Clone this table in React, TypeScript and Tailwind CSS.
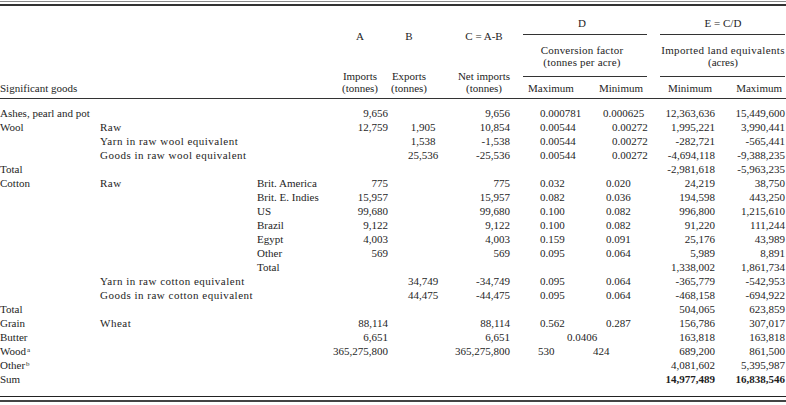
const cols = "grid grid-cols-[100px_157px_73px_60px_66px_56px_78px_62px_65px_69px]";

type Row = {
  g?: string;
  sup?: string;
  s?: string;
  c?: string;
  a?: string;
  b?: string;
  n?: string;
  dmax?: string;
  dmaxPad?: string;
  dmin?: string;
  dminPad?: string;
  span?: string;
  emin?: string;
  emax?: string;
  bold?: boolean;
};

const W = "pl-[22px]";
const C3 = "pl-[16px]";

const rows: Row[] = [
  { g: "Ashes, pearl and pot", a: "9,656", n: "9,656", dmax: "0.000781", dmin: "0.000625", dminPad: "pl-[13px]", emin: "12,363,636", emax: "15,449,600" },
  { g: "Wool", s: "Raw", a: "12,759", b: "1,905", n: "10,854", dmax: "0.00544", dmin: "0.00272", dminPad: W, emin: "1,995,221", emax: "3,990,441" },
  { s: "Yarn in raw wool equivalent", b: "1,538", n: "-1,538", dmax: "0.00544", dmin: "0.00272", dminPad: W, emin: "-282,721", emax: "-565,441" },
  { s: "Goods in raw wool equivalent", b: "25,536", n: "-25,536", dmax: "0.00544", dmin: "0.00272", dminPad: W, emin: "-4,694,118", emax: "-9,388,235" },
  { g: "Total", emin: "-2,981,618", emax: "-5,963,235" },
  { g: "Cotton", s: "Raw", c: "Brit. America", a: "775", n: "775", dmax: "0.032", dmin: "0.020", dminPad: C3, emin: "24,219", emax: "38,750" },
  { c: "Brit. E. Indies", a: "15,957", n: "15,957", dmax: "0.082", dmin: "0.036", dminPad: C3, emin: "194,598", emax: "443,250" },
  { c: "US", a: "99,680", n: "99,680", dmax: "0.100", dmin: "0.082", dminPad: C3, emin: "996,800", emax: "1,215,610" },
  { c: "Brazil", a: "9,122", n: "9,122", dmax: "0.100", dmin: "0.082", dminPad: C3, emin: "91,220", emax: "111,244" },
  { c: "Egypt", a: "4,003", n: "4,003", dmax: "0.159", dmin: "0.091", dminPad: C3, emin: "25,176", emax: "43,989" },
  { c: "Other", a: "569", n: "569", dmax: "0.095", dmin: "0.064", dminPad: C3, emin: "5,989", emax: "8,891" },
  { c: "Total", emin: "1,338,002", emax: "1,861,734" },
  { s: "Yarn in raw cotton equivalent", b: "34,749", n: "-34,749", dmax: "0.095", dmin: "0.064", dminPad: C3, emin: "-365,779", emax: "-542,953" },
  { s: "Goods in raw cotton equivalent", b: "44,475", n: "-44,475", dmax: "0.095", dmin: "0.064", dminPad: C3, emin: "-468,158", emax: "-694,922" },
  { g: "Total", emin: "504,065", emax: "623,859" },
  { g: "Grain", s: "Wheat", a: "88,114", n: "88,114", dmax: "0.562", dmin: "0.287", dminPad: C3, emin: "156,786", emax: "307,017" },
  { g: "Butter", a: "6,651", n: "6,651", span: "0.0406", emin: "163,818", emax: "163,818" },
  { g: "Wood", sup: "a", a: "365,275,800", n: "365,275,800", dmax: "530", dmaxPad: "pl-[26px]", dmin: "424", dminPad: "pl-[3px]", emin: "689,200", emax: "861,500" },
  { g: "Other", sup: "b", emin: "4,081,602", emax: "5,395,987" },
  { g: "Sum", emin: "14,977,489", emax: "16,838,546", bold: true },
];

function BodyRow({ r }: { r: Row }) {
  const num = "flex justify-end whitespace-nowrap";
  return (
    <div className={`${cols} h-[14px] leading-[14px]`}>
      <div className="whitespace-nowrap">
        {r.g}
        {r.sup && <sup className="text-[7px] ml-[1px]">{r.sup}</sup>}
      </div>
      <div className="whitespace-nowrap tracking-[0.5px]">{r.s}</div>
      <div className="whitespace-nowrap">{r.c}</div>
      <div className={`${num} pr-[2px]`}>{r.a}</div>
      <div className="text-center">{r.b}</div>
      <div className={`${num} pr-[2px]`}>{r.n}</div>
      {r.span ? (
        <div className="col-span-2 pl-[55px]">{r.span}</div>
      ) : (
        <>
          <div className={r.dmaxPad ?? "pl-[28px]"}>{r.dmax}</div>
          <div className={r.dminPad}>{r.dmin}</div>
        </>
      )}
      <div className={`${num} pr-[2px] ${r.bold ? "font-bold" : ""}`}>{r.emin}</div>
      <div className={`${num} pr-[1px] ${r.bold ? "font-bold" : ""}`}>{r.emax}</div>
    </div>
  );
}

function Header() {
  return (
    <div className={`${cols} h-[92px] leading-[12px]`}>
      <div className="col-span-3 flex items-end pb-[4px]">Significant goods</div>
      <div className="flex flex-col items-center pt-[24px] pb-[4px]">
        <span>A</span>
        <span className="mt-auto">Imports</span>
        <span>(tonnes)</span>
      </div>
      <div className="flex flex-col items-center pr-[28px] pt-[24px] pb-[4px]">
        <span>B</span>
        <span className="mt-auto">Exports</span>
        <span>(tonnes)</span>
      </div>
      <div className="flex flex-col items-center pt-[24px] pb-[4px]">
        <span>C = A-B</span>
        <span className="mt-auto">Net imports</span>
        <span>(tonnes)</span>
      </div>
      <div className="col-span-2 flex flex-col pt-[11px] pb-[4px]">
        <div className="text-center">D</div>
        <div className="mt-[5px] ml-[11px] mr-[5px] h-px bg-[#333]" />
        <div className="mt-[9px] text-center tracking-[0.2px]">Conversion factor</div>
        <div className="text-center tracking-[0.2px]">(tonnes per acre)</div>
        <div className="mt-[8px] ml-[11px] mr-[5px] h-px bg-[#333]" />
        <div className="mt-[5px] grid grid-cols-[78px_62px]">
          <span className="text-center">Maximum</span>
          <span className="text-center">Minimum</span>
        </div>
      </div>
      <div className="col-span-2 flex flex-col pt-[11px] pb-[4px]">
        <div className="text-center pl-[8px]">E = C/D</div>
        <div className="mt-[5px] ml-[8px] mr-px h-px bg-[#333]" />
        <div className="mt-[9px] text-center pl-[8px] whitespace-nowrap tracking-[0.35px]">Imported land equivalents</div>
        <div className="text-center pl-[8px]">(acres)</div>
        <div className="mt-[8px] ml-[8px] mr-px h-px bg-[#333]" />
        <div className="mt-[5px] grid grid-cols-[65px_69px]">
          <span className="text-right pr-[5px]">Minimum</span>
          <span className="text-right pr-[4px]">Maximum</span>
        </div>
      </div>
    </div>
  );
}

export default function App() {
  return (
    <div className="w-[786px] h-[405px] bg-white text-[#1e1e1e] text-[11px] font-['Liberation_Serif',serif] overflow-hidden">
      <div className="mt-px h-px bg-[#888]" />
      <div className="mt-[2px] h-[2px] bg-[#333]" />
      <Header />
      <div className="h-px bg-[#333]" />
      <div className="pt-[7px]">
        {rows.map((r, i) => (
          <BodyRow key={i} r={r} />
        ))}
      </div>
      <div className="mt-[10px] h-px bg-[#222]" />
      <div className="mt-[3px] h-[2px] bg-[#444]" />
    </div>
  );
}
